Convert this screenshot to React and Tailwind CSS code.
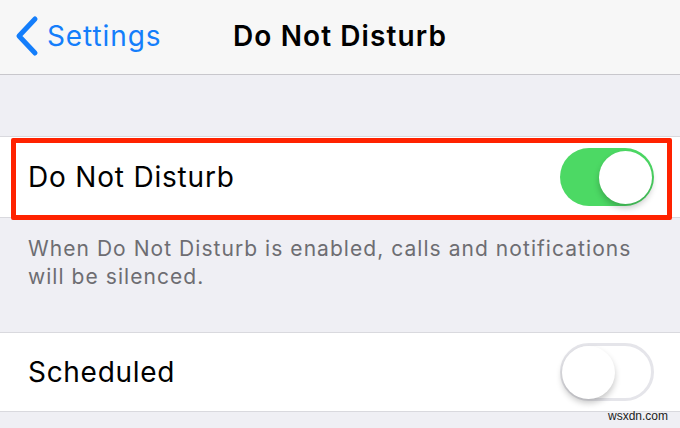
function Toggle({ on }) {
  return (
    <div
      className={`relative w-[94px] h-[58px] rounded-full ${
        on ? 'bg-[#4cd964]' : 'bg-white border-[3px] border-[#e5e5ea]'
      }`}
    >
      <div
        className={`absolute rounded-full bg-white w-[53px] h-[53px] shadow-[0_4px_6px_rgba(0,0,0,0.22)] ${
          on ? 'right-[2px] top-[2.5px]' : 'left-[-1px] top-[-0.5px]'
        }`}
      />
    </div>
  );
}

export default function App() {
  return (
    <div className="relative w-[680px] h-[428px] overflow-hidden bg-[#efeff4] font-['Inter',sans-serif]">
      {/* Nav bar */}
      <header className="relative h-[75px] bg-[#f7f7f7] border-b border-[#c8c7cc] flex items-center">
        <div className="flex items-center pl-[14px] text-[#147efb] -mt-[3px]">
          <svg width="26" height="42" viewBox="0 0 26 42" fill="none" className="mr-[7px]">
            <polyline points="21,4 5,21 21,38" stroke="currentColor" strokeWidth="5" strokeLinecap="round" strokeLinejoin="round" />
          </svg>
          <span className="text-[28px] tracking-[0.9px]">Settings</span>
        </div>
        <h1 className="absolute left-0 right-0 -mt-[3px] text-center text-[28px] font-semibold text-black tracking-[1.1px] pointer-events-none">
          Do Not Disturb
        </h1>
      </header>

      <div className="h-[61px]" />

      {/* Do Not Disturb row */}
      <div className="relative h-[82px] bg-white border-y border-[#d9d9de] flex items-center justify-between pl-[28px] pr-[26px]">
        <span className="text-[28px] text-black tracking-[0.8px]">Do Not Disturb</span>
        <Toggle on />
        <div className="absolute left-[11px] right-[8px] top-[1px] bottom-[-3px] border-[5px] border-[#ff2200] rounded-[2px] pointer-events-none" />
      </div>

      <p className="px-[28px] pt-[17px] text-[21px] leading-[28px] text-[#6d6d72] tracking-[1.05px]">
        When Do Not Disturb is enabled, calls and notifications will be silenced.
      </p>

      <div className="h-[41px]" />

      {/* Scheduled row */}
      <div className="relative h-[80px] bg-white border-y border-[#d9d9de] flex items-center justify-between pl-[28px] pr-[26px]">
        <span className="text-[28px] text-black tracking-[0.7px]">Scheduled</span>
        <Toggle on={false} />
      </div>

      <span className="absolute right-[12px] bottom-[6px] text-[12px] leading-[12px] text-[#222] font-['Liberation_Sans',sans-serif]">
        wsxdn.com
      </span>
    </div>
  );
}
